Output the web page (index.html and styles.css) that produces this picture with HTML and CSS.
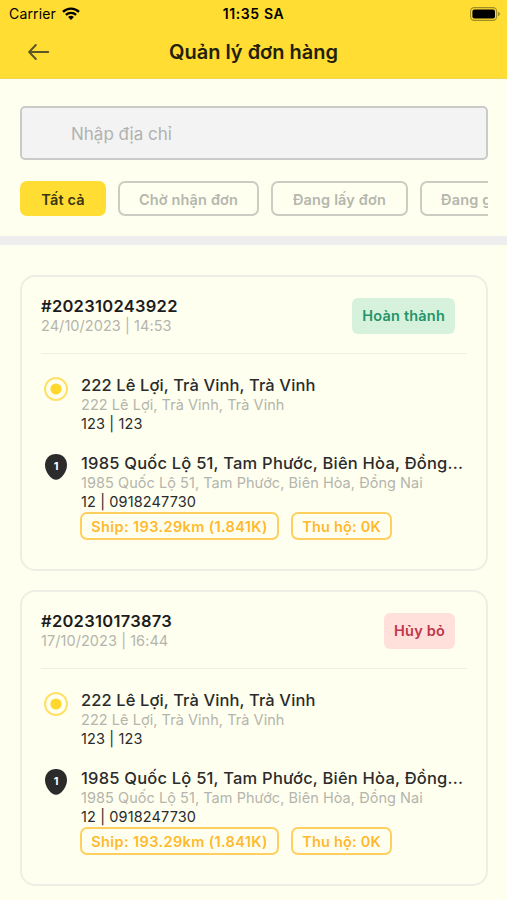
FILE: index.html
```html
<!DOCTYPE html>
<html lang="vi">
<head>
    <meta charset="UTF-8">
    <meta name="viewport" content="width=device-width, initial-scale=1.0">
    <title>Quản lý đơn hàng</title>
    <link rel="stylesheet" href="styles.css">
</head>
<body>
    <header>
        <div class="status-bar">
            <div class="carrier">
                <span>Carrier</span>
                <svg class="wifi" width="18" height="13" viewBox="0 0 18 13">
                    <path d="M1 4.9 A11.4 11.4 0 0 1 17 4.9" fill="none" stroke="#000" stroke-width="2.4"/>
                    <path d="M3.9 7.9 A7.3 7.3 0 0 1 14.1 7.9" fill="none" stroke="#000" stroke-width="2.2"/>
                    <path d="M9 13 L6.1 10.1 A4.1 4.1 0 0 1 11.9 10.1 Z" fill="#000"/>
                </svg>
            </div>
            <span class="time">11:35 SA</span>
            <svg class="battery" width="31" height="14" viewBox="0 0 31 14">
                <rect x="0.6" y="0.6" width="26" height="12.8" rx="3.6" fill="none" stroke="#a08c24" stroke-width="1.1"/>
                <rect x="2.4" y="2.4" width="22.6" height="9.2" rx="2" fill="#000"/>
                <path d="M28 4.8 Q30 5.6 30 7 Q30 8.4 28 9.2 Z" fill="#a08c24"/>
            </svg>
        </div>
        <div class="title-bar">
            <svg class="back" width="22" height="18" viewBox="0 0 22 18">
                <path d="M20.2 9 H1.5 M7.8 2 L1.2 9 L7.8 16" fill="none" stroke="#5e5626" stroke-width="2" stroke-linecap="round" stroke-linejoin="round"/>
            </svg>
            <h1>Quản lý đơn hàng</h1>
        </div>
    </header>

    <section class="filters">
        <input type="text" class="search" placeholder="Nhập địa chỉ">
        <div class="tabs">
            <button class="tab active">Tất cả</button>
            <button class="tab tab-waiting">Chờ nhận đơn</button>
            <button class="tab tab-picking">Đang lấy đơn</button>
            <button class="tab tab-shipping">Đang giao</button>
        </div>
    </section>

    <main>
        <div class="order">
            <div class="order-head">
                <div>
                    <div class="order-id">#202310243922</div>
                    <div class="order-date">24/10/2023 | 14:53</div>
                </div>
                <span class="status done">Hoàn thành</span>
            </div>
            <div class="stop">
                <svg class="marker" width="26" height="26" viewBox="0 0 26 26">
                    <circle cx="13" cy="13" r="11" fill="none" stroke="#ffe069" stroke-width="2"/>
                    <circle cx="13" cy="13" r="5.6" fill="#ffd82b"/>
                </svg>
                <div class="stop-info">
                    <div class="address">222 Lê Lợi, Trà Vinh, Trà Vinh</div>
                    <div class="address-sub">222 Lê Lợi, Trà Vinh, Trà Vinh</div>
                    <div class="contact">123 | 123</div>
                </div>
            </div>
            <div class="stop">
                <svg class="marker" width="26" height="26" viewBox="0 0 26 26">
                    <path d="M13 0 C19.4 0 24 4.6 24 11 C24 18 18 25.8 13 25.8 C8 25.8 2 18 2 11 C2 4.6 6.6 0 13 0 Z" fill="#2b2b2b"/>
                    <text class="pin-text" x="13.2" y="15.5" text-anchor="middle">1</text>
                </svg>
                <div class="stop-info">
                    <div class="address address-long">1985 Quốc Lộ 51, Tam Phước, Biên Hòa, Đồng...</div>
                    <div class="address-sub">1985 Quốc Lộ 51, Tam Phước, Biên Hòa, Đồng Nai</div>
                    <div class="contact">12 | 0918247730</div>
                    <div class="tags">
                        <span class="tag tag-ship">Ship: 193.29km (1.841K)</span>
                        <span class="tag tag-cod">Thu hộ: 0K</span>
                    </div>
                </div>
            </div>
        </div>

        <div class="order">
            <div class="order-head">
                <div>
                    <div class="order-id">#202310173873</div>
                    <div class="order-date">17/10/2023 | 16:44</div>
                </div>
                <span class="status cancelled">Hủy bỏ</span>
            </div>
            <div class="stop">
                <svg class="marker" width="26" height="26" viewBox="0 0 26 26">
                    <circle cx="13" cy="13" r="11" fill="none" stroke="#ffe069" stroke-width="2"/>
                    <circle cx="13" cy="13" r="5.6" fill="#ffd82b"/>
                </svg>
                <div class="stop-info">
                    <div class="address">222 Lê Lợi, Trà Vinh, Trà Vinh</div>
                    <div class="address-sub">222 Lê Lợi, Trà Vinh, Trà Vinh</div>
                    <div class="contact">123 | 123</div>
                </div>
            </div>
            <div class="stop">
                <svg class="marker" width="26" height="26" viewBox="0 0 26 26">
                    <path d="M13 0 C19.4 0 24 4.6 24 11 C24 18 18 25.8 13 25.8 C8 25.8 2 18 2 11 C2 4.6 6.6 0 13 0 Z" fill="#2b2b2b"/>
                    <text class="pin-text" x="13.2" y="15.5" text-anchor="middle">1</text>
                </svg>
                <div class="stop-info">
                    <div class="address address-long">1985 Quốc Lộ 51, Tam Phước, Biên Hòa, Đồng...</div>
                    <div class="address-sub">1985 Quốc Lộ 51, Tam Phước, Biên Hòa, Đồng Nai</div>
                    <div class="contact">12 | 0918247730</div>
                    <div class="tags">
                        <span class="tag tag-ship">Ship: 193.29km (1.841K)</span>
                        <span class="tag tag-cod">Thu hộ: 0K</span>
                    </div>
                </div>
            </div>
        </div>
    </main>
</body>
</html>
```
FILE: styles.css
```css
/* Global Styles */
* {
    box-sizing: border-box;
}

body {
    font-family: Inter, "Liberation Sans", sans-serif;
    background-color: #fffff0;
    color: #2b2b2b;
    margin: 0;
    height: 900px;
    overflow: hidden;
}

/* Header */
header {
    height: 79px;
    background-color: #ffdd33;
    border-bottom: 1px solid #f3d651;
}

.status-bar {
    display: grid;
    grid-template-columns: 1fr auto 1fr;
    align-items: center;
    height: 27px;
    padding: 0 6px 0 9px;
    color: #000;
    font-size: 14px;
}

.carrier {
    display: flex;
    align-items: center;
    gap: 6px;
    letter-spacing: 0.15px;
}

.time {
    margin-right: 3px;
    font-weight: 600;
    letter-spacing: 0.6px;
}

.battery {
    justify-self: end;
}

.title-bar {
    display: grid;
    grid-template-columns: 60px 1fr 60px;
    align-items: center;
    height: 50px;
}

.back {
    margin-left: 28px;
}

h1 {
    margin: 0;
    font-size: 20px;
    font-weight: 600;
    text-align: center;
    color: #22200c;
}

/* Search and tabs */
.filters {
    padding: 27px 19px 20px 20px;
    border-bottom: 9px solid #eeeeee;
}

.search {
    display: block;
    width: 100%;
    height: 54px;
    padding: 2px 49px 0;
    border: 2px solid #c9cbc8;
    border-radius: 5px;
    background-color: #f3f3f3;
    font-family: inherit;
    font-size: 17px;
}

.search::placeholder {
    color: #b0b2b0;
    opacity: 1;
}

.tabs {
    display: flex;
    gap: 12px;
    margin-top: 21px;
    overflow: hidden;
}

.tab {
    flex-shrink: 0;
    height: 35px;
    padding: 1px 0 0;
    border: 2px solid #cbcdc3;
    border-radius: 7px;
    background: none;
    color: #b5b7ae;
    font-family: inherit;
    font-size: 14.5px;
    font-weight: 600;
    letter-spacing: 0.15px;
}

.tab.active {
    width: 86px;
    border-color: #ffdd33;
    background-color: #ffdd33;
    color: #3a3412;
}

.tab-waiting {
    width: 141px;
}

.tab-picking {
    width: 137px;
}

.tab-shipping {
    width: 114px;
}

/* Orders */
main {
    display: flex;
    flex-direction: column;
    gap: 19px;
    padding: 30px 19px 0 20px;
}

.order {
    height: 296px;
    padding: 19px 19px 17px;
    border: 2px solid #eeeee5;
    border-radius: 15px;
}

.order-head {
    display: flex;
    justify-content: space-between;
    height: 58px;
    padding-right: 12px;
    border-bottom: 1px solid #efefe6;
}

.order-id {
    font-size: 16.5px;
    font-weight: 600;
    line-height: 21px;
    letter-spacing: 0.28px;
    color: #1c1c1c;
}

.order-date {
    font-size: 14.5px;
    line-height: 18px;
    letter-spacing: 0.06px;
    color: #b4b5ac;
}

.status {
    height: 36px;
    margin-top: 2px;
    padding: 0 10px;
    border-radius: 6px;
    font-size: 14.5px;
    font-weight: 600;
    line-height: 36px;
    letter-spacing: 0.2px;
}

.done {
    background-color: #d6f2dc;
    color: #24946a;
}

.cancelled {
    background-color: #ffe0db;
    color: #bf3549;
}

/* Pick-up and drop-off points */
.stop {
    display: flex;
    height: 78px;
}

.order-head + .stop {
    margin-top: 21px;
}

.marker {
    flex-shrink: 0;
    margin: 1px 12px 0 2px;
}

.pin-text {
    fill: #fff;
    font-size: 11px;
    font-weight: 700;
}

.stop-info {
    flex: 1;
    min-width: 0;
}

.address {
    font-size: 16.5px;
    font-weight: 500;
    line-height: 20px;
    letter-spacing: 0.1px;
    white-space: nowrap;
}

.address-long {
    letter-spacing: 0.21px;
}

.address-sub {
    font-size: 14.5px;
    line-height: 19px;
    letter-spacing: 0.05px;
    color: #b4b5ac;
    white-space: nowrap;
}

.contact {
    font-size: 14.5px;
    line-height: 20px;
    letter-spacing: 0.12px;
}

.tags {
    display: flex;
    gap: 12px;
    margin-left: -1px;
}

.tag {
    height: 28px;
    border: 2px solid #ffd060;
    border-radius: 7px;
    color: #ffb92e;
    font-size: 14.5px;
    font-weight: 600;
    line-height: 25px;
    text-align: center;
}

.tag-ship {
    width: 199px;
    letter-spacing: 0.38px;
}

.tag-cod {
    width: 101px;
    letter-spacing: 0.2px;
}
```
